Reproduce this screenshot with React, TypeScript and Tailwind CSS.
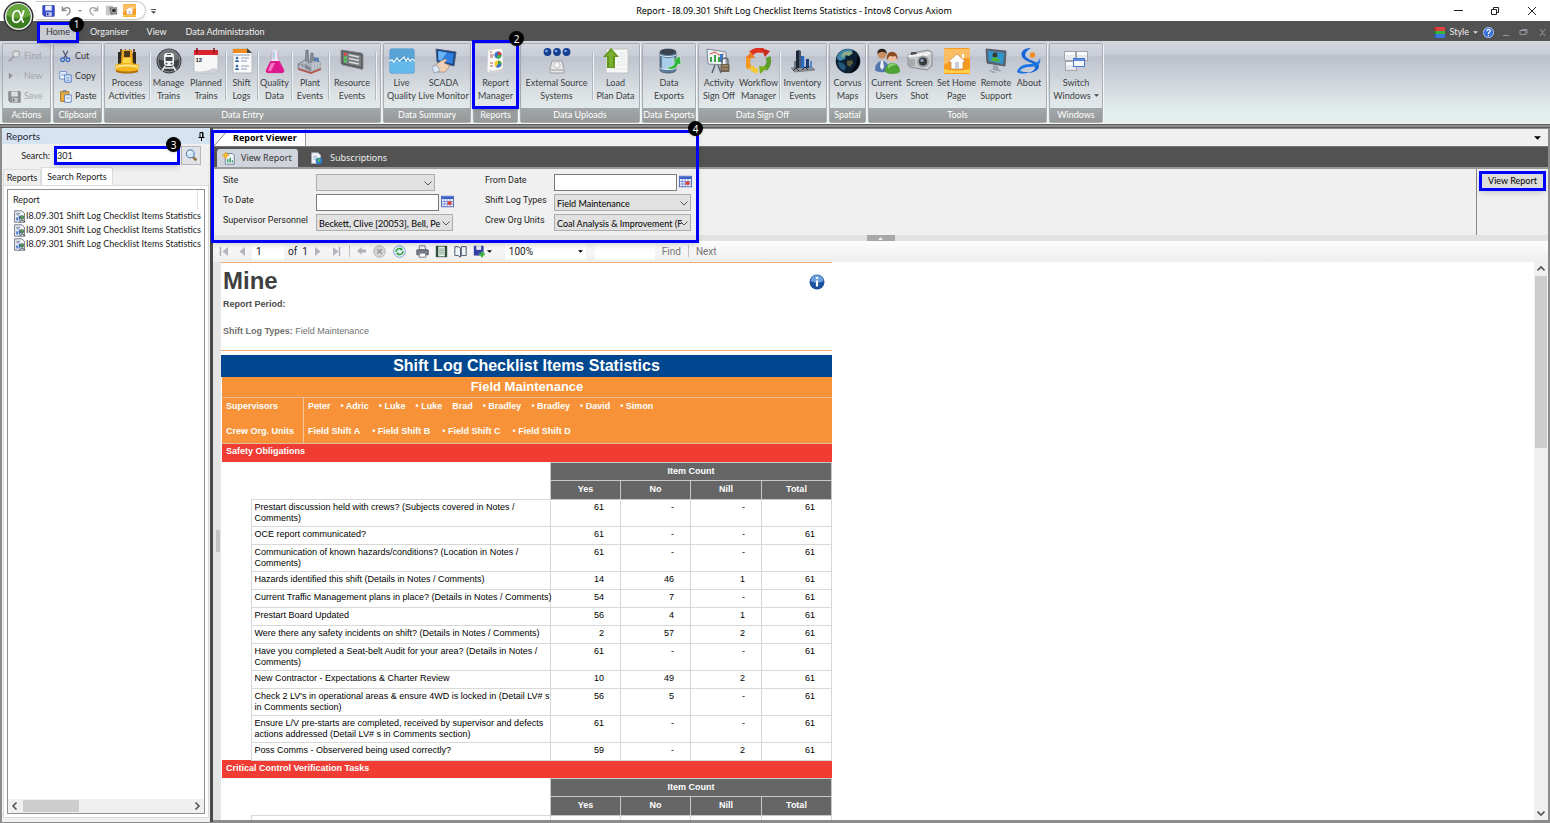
import React from "react";

type IconProps = { className?: string };

/* ---------- ribbon icons (26 x 26 grid) ---------- */
const Svg = ({ children, className = "size-[26px]", box = "0 0 26 26" }: { children: React.ReactNode; className?: string; box?: string }) => (
  <svg viewBox={box} className={`${className} shrink-0`} aria-hidden="true" fill="none">
    {children}
  </svg>
);

const ProcessIcon = () => (
  <Svg>
    <path d="M4 5h2V1h2v4h3V1h1v5h3V1h1v4h3V1h2v4h1v10H4z" fill="#6b5a3a" />
    <path d="M8 2h10l1 14H7z" fill="#f0a818" />
    <path d="M10 3h6v6h-6z" fill="#4a3c20" />
    <path d="M4 4h3v12H4zM19 4h3v12h-3z" fill="#2e2a22" />
    <path d="M9 10h8v6H9z" fill="#ffd850" />
    <path d="M1 17c7-3 17-3 24 0l-1 6c-7 3-15 3-22 0z" fill="#f5b41c" />
    <path d="M2 18c7-2 15-2 22 0v2c-7-2-15-2-22 0z" fill="#ffe68a" />
    <path d="M2 22c7 2 15 2 22 0v2c-7 2-15 2-22 0z" fill="#b0700c" />
  </Svg>
);
const TrainIcon = () => (
  <Svg>
    <circle cx="13" cy="13" r="12.500" fill="#3e4145" />
    <circle cx="13" cy="13" r="11" stroke="#8b8f94" />
    <path d="M3 11a10 10 0 0 1 20 0c-6 3-14 3-20 0z" fill="#73777c" />
    <rect x="8" y="5" width="10" height="13" rx="3" fill="#f4f4f4" />
    <rect x="9.500" y="9" width="7" height="4" fill="#44484c" />
    <path d="M11 6.500h4" stroke="#44484c" />
    <circle cx="10.500" cy="15.500" r="1" fill="#44484c" />
    <circle cx="15.500" cy="15.500" r="1" fill="#44484c" />
    <path d="M9 18l-3 5M17 18l3 5M8 20h10" stroke="#e8e8e8" strokeWidth="1.500" />
  </Svg>
);
const CalendarIcon = () => (
  <Svg>
    <path d="M1 3h24v19l-4 3H3l-2-2z" fill="#f7f7f8" stroke="#b9bcc4" />
    <path d="M1 2h24v5H1z" fill="#d8222c" />
    <path d="M4 0v5M21 0v5" stroke="#7c1018" strokeWidth="1.500" />
    <text x="2.500" y="13.500" fontSize="6" fontWeight="700" fill="#222" fontFamily="Liberation Sans">12</text>
    <path d="M1 23c8 1 14 0 19-3l5 1-4 4H2z" fill="#cfd2da" />
  </Svg>
);
const ShiftIcon = () => (
  <Svg>
    <path d="M4 1h14l5 4v20H4z" fill="#fbfbfb" stroke="#b9b9b9" />
    <path d="M4 1h14v4H4z" fill="#f08a1c" />
    <path d="M18 0l5 5h-5z" fill="#444" />
    <circle cx="8" cy="10" r="1.300" fill="#2f68a8" />
    <path d="M6 14a2 2 0 0 1 4 0z" fill="#2f68a8" />
    <circle cx="8" cy="18" r="1.300" fill="#2f68a8" />
    <path d="M6 22a2 2 0 0 1 4 0z" fill="#2f68a8" />
    <path d="M12 10h8M12 13h6M12 18h8M12 21h6M5 7h16" stroke="#8a9cb4" />
  </Svg>
);
const FlaskIcon = () => (
  <Svg>
    <path d="M10 2h6v8l6 12c.5 2-.5 3-2 3H6c-1.500 0-2.500-1-2-3l6-12z" fill="#f3e6f3" stroke="#c9a9c6" />
    <path d="M8.500 13h9l4.500 9c.4 2-.6 3-2 3H6c-1.400 0-2.400-1-2-3z" fill="#e0188f" />
    <path d="M9 15h4l-4 8H6z" fill="#f874c2" />
    <path d="M9 1h8v2H9z" fill="#d8d8e4" />
    <path d="M11 4h2v7h-2z" fill="#a7d8ea" />
  </Svg>
);
const PlantIcon = () => (
  <Svg>
    <path d="M9 2h2l1 16H8zM14 5h2l1 12h-4z" fill="#878e98" stroke="#5f6670" strokeWidth=".6" />
    <path d="M10 1c-2 0-2-1 1-1M15 4c0-2 2-2 3-2" stroke="#d8dce0" />
    <path d="M1 16l7-4 5 3 5-4 5 3v7l-9 4L1 20z" fill="#a9b0ba" stroke="#666d78" strokeWidth=".6" />
    <path d="M2 17l6 3 6 3v-3l-6-4-6-1z" fill="#7d8590" />
    <path d="M1 21l13 4 10-4" stroke="#b7584a" strokeWidth="1.800" />
    <path d="M4 15v5M7 14v7M16 15v7M19 14v7M22 14v6" stroke="#e0e4ea" strokeWidth=".8" />
    <path d="M17 9l5 1v4l-5-1z" fill="#5a7fb0" />
  </Svg>
);
const ResourceIcon = () => (
  <Svg>
    <path d="M3 2l19 3c1 0 2 1 2 2v13c0 1-1 2-2 1L4 17c-1 0-2-1-2-2V3c0-1 0-1 1-1z" fill="#54585c" stroke="#8a8e92" />
    <path d="M4 4l18 3v12L4 15z" fill="#7a7e82" />
    <rect x="5" y="5" width="3" height="2.500" fill="#e04838" />
    <rect x="5" y="8.500" width="3" height="2.500" fill="#4ec850" />
    <rect x="5" y="12" width="3" height="2.500" fill="#4ec850" />
    <path d="M10 7l10 2M10 10.500l10 2M10 14l10 2" stroke="#dcdcdc" strokeWidth="1.500" />
  </Svg>
);
const LiveQualityIcon = () => (
  <Svg>
    <rect x=".5" y=".5" width="25" height="25" rx="2" fill="#3d8fcb" />
    <path d="M1 13h24v10c0 1-1 2-2 2H3c-1 0-2-1-2-2z" fill="#65b9ea" />
    <path d="M1 1h24v9C16 8 8 10 1 14z" fill="#5aa3d6" />
    <path d="M0 13l3-1 2 2 3-4 2 3 3-2 2-2 2 4 2-3 2 3 2-2 3 2" stroke="#fff" strokeWidth="1.200" />
  </Svg>
);
const ScadaIcon = () => (
  <Svg>
    <path d="M5 1l20 3-2 14-17-4z" fill="#183e7c" stroke="#53688a" />
    <path d="M7 3l16 2.500-1.500 10.500L7.500 12.500z" fill="#2f7fe0" />
    <path d="M7 3l9 1.500-6 8-2.500-.5z" fill="#69b4f6" />
    <path d="M3 18l7-5 4-2 2 1-3 3 5 2v2l-4 5-8 0z" fill="#f0cfb4" stroke="#9c7862" strokeWidth=".6" />
    <path d="M1 19l5-2 3 6-6 2z" fill="#dfe9f5" stroke="#7a8ba5" strokeWidth=".6" />
  </Svg>
);
const ReportIcon = () => (
  <Svg>
    <path d="M5 2l13-2 2 2v20l-2 2-13 1-1-3z" fill="#fafafa" stroke="#c8c8c8" strokeWidth=".7" />
    <circle cx="15" cy="7" r="3.500" fill="#3a70cf" />
    <path d="M15 7V3.500A3.500 3.500 0 0 1 18.500 7z" fill="#e03a30" />
    <path d="M15 7h3.500A3.500 3.500 0 0 1 13 10z" fill="#47b24a" />
    <circle cx="15" cy="16" r="3.500" fill="#f2cb24" />
    <path d="M15 16v-3.500a3.500 3.500 0 0 1 3.500 3.500z" fill="#3a9c4a" />
    <path d="M15 16h3.500a3.500 3.500 0 0 1-5.500 3z" fill="#3a70cf" />
    <path d="M7 4h2M7 7h4M7 9h3M7 15h3M7 18h3" stroke="#b65c50" />
    <path d="M6 22c5 1 9 0 14-2v2l-2 2-12 1z" fill="#d5d5d5" />
  </Svg>
);
const SourceIcon = () => (
  <Svg className="h-[26px] w-[28px]" box="0 0 28 26">
    {[4.5, 14, 23.5].map((x) => (
      <g key={x}>
        <circle cx={x} cy="4" r="3.900" fill="#163f8f" />
        <circle cx={x - 1} cy="3" r="1.300" fill="#7ba6e8" />
      </g>
    ))}
    <path d="M4.500 8v3h19V8M14 8v5" stroke="#c0c4ca" />
    <path d="M9 13h10l2 8v4H7v-4z" fill="#e6e6e8" stroke="#9e9ea2" />
    <circle cx="14" cy="17" r="3" stroke="#c2c2c6" fill="#f6f6f6" />
    <path d="M8 22h12" stroke="#9a9a9e" />
  </Svg>
);
const LoadIcon = () => (
  <Svg>
    <path d="M3 1h22v24H3z" fill="#f7f7f7" stroke="#c2c2c2" />
    <path d="M17 5h6M17 8h6M17 11h6M14 14h9M6 21h17M14 17h9" stroke="#e2e4e8" />
    <path d="M8 0l8 9h-4v11H4V9H0z" fill="#5f961a" />
    <path d="M8 2l5 6h-3v11H6V8H3z" fill="#7ab030" />
  </Svg>
);
const ExportIcon = () => (
  <Svg>
    <path d="M4 4c0-4 16-4 16 0v18c0 4-16 4-16 0z" fill="#5d7f9d" stroke="#3c4d60" strokeWidth=".7" />
    <ellipse cx="12" cy="4" rx="8" ry="3" fill="#3a444e" />
    <path d="M6 9c3 1.500 9 1.500 12 0v11c-3 2-9 2-12 0z" fill="#a9cdea" />
    <path d="M4 7c3 2 13 2 16 0M4 20c3 2 13 2 16 0" stroke="#e6eef6" />
    <path d="M12 19c4 0 7-2 7-6l-3 0 8-5 1 9-3-1c-1 4-5 6-10 5z" fill="#2fb43c" stroke="#e8fbe8" strokeWidth=".5" />
  </Svg>
);
const SignOffIcon = () => (
  <Svg>
    <path d="M1 1l19 3v13L2 16z" fill="#eef3f8" stroke="#7c8795" />
    <path d="M4 14V9h2v5zM8 14V7h2v7zM12 14V9h2v5z" fill="#3aa346" />
    <path d="M4 6l5-2 4 3 5-1" stroke="#d8452e" />
    <path d="M14 6h3v8h-3z" fill="#3c79cc" />
    <path d="M9 17l-3 8M12 17l3 8" stroke="#5d6671" strokeWidth="1.500" />
    <path d="M16 16v-3c0-4 6-4 6 0v3" stroke="#6a6a6a" strokeWidth="1.500" />
    <rect x="14.500" y="16" width="9" height="8" rx="1" fill="#6d6253" />
    <path d="M16 18h6M16 21h6" stroke="#c2a35c" />
  </Svg>
);
const WorkflowIcon = () => (
  <Svg>
    <path d="M5 5.500a10.500 10.500 0 0 1 12-2.500" stroke="#df3420" strokeWidth="5" />
    <path d="M15 0l9 3-5 6z" fill="#c92a1a" />
    <path d="M22 9a10.500 10.500 0 0 1-3 12" stroke="#5c9c2c" strokeWidth="5" />
    <path d="M22 19l-8 7-1-8z" fill="#7aac20" />
    <path d="M12 23a10 10 0 0 1-7-4" stroke="#f4c832" strokeWidth="5" />
    <path d="M3.500 20a10.500 10.500 0 0 1-.5-11" stroke="#f29a1c" strokeWidth="5" />
    <path d="M0 10l5-6 4 6z" fill="#f07820" />
  </Svg>
);
const InventoryIcon = () => (
  <Svg>
    <path d="M1 20l20-2 4 4-20 2z" fill="#8d9097" stroke="#5f6268" strokeWidth=".6" />
    <path d="M6 3l3-1v18H6z" fill="#1c2634" />
    <path d="M9 2l2 1v17H9z" fill="#4a5a70" />
    <path d="M11 8h3v12h-3z" fill="#2f68b8" />
    <path d="M14 9h1v11h-1z" fill="#86b0e6" />
    <path d="M16 11h3v9h-3z" fill="#1c3c74" />
    <path d="M20 13h2v7h-2z" fill="#4f88d0" />
    <path d="M4 13h2v8H4z" fill="#6d7786" />
    <path d="M3 23l3-3 3 3M12 22l3-3 3 3" stroke="#2a2d33" />
  </Svg>
);
const GlobeIcon = () => (
  <Svg>
    <circle cx="13" cy="13" r="12.300" fill="#0b2033" />
    <path d="M5 4c4-3 9-4 13-2l-2 4-5 1-1 4-5 2-3-2c0-3 1-5 3-7z" fill="#3d86a8" />
    <path d="M9 4l6-1 3 2-4 3-4-1-2 3-2-2z" fill="#8fae8a" />
    <path d="M3 14l5 1 3 4-2 4c-4-2-6-5-6-9z" fill="#24597c" />
    <path d="M22 6a12 12 0 0 1-7 19c5-5 8-11 7-19z" fill="#02060b" />
    <path d="M12 13l5-1 1 3-3 4-3-2z" fill="#5c5a3c" />
  </Svg>
);
const UsersIcon = () => (
  <Svg>
    <circle cx="8" cy="6" r="4.500" fill="#c98d62" />
    <path d="M3.500 6C2-1 14-1 12.500 6 11 3 6 3 3.500 6z" fill="#2d2620" />
    <path d="M1 22c0-12 14-12 14 0-3 3-11 3-14 0z" fill="#5577ad" />
    <path d="M7 13h2l1 6-2 3-2-3z" fill="#eef2f8" />
    <circle cx="18" cy="9" r="4.500" fill="#edbf98" />
    <path d="M13 12c-2-11 12-11 10.500 0l-2-4c-3 1-5 0-6 0z" fill="#8c4a22" />
    <path d="M11 24c0-12 15-12 15 0-3 2.500-12 2.500-15 0z" fill="#4ea236" />
    <path d="M14 18c2-3 6-3 8-1-3 0-6 1-8 4z" fill="#8fd070" />
  </Svg>
);
const CameraIcon = () => (
  <Svg>
    <path d="M1 7l5-2 15-3 4 2v14l-5 4-17-3-2-2z" fill="#c9cbce" stroke="#74777c" strokeWidth=".8" />
    <path d="M1 7l20-3 4 1-5 3-19 1z" fill="#f1f1f2" />
    <path d="M4 4h5l1 2-6 1z" fill="#4b4e52" />
    <circle cx="16" cy="13.500" r="6" fill="#9d9fa4" />
    <circle cx="16" cy="13.500" r="4" fill="#34373b" />
    <circle cx="15" cy="12.500" r="1.700" fill="#8f9fb8" />
    <path d="M2 11h6v7H2z" fill="#a6a9ad" />
  </Svg>
);
const HomeIcon = ({ className }: IconProps) => (
  <Svg className={className}>
    <rect width="26" height="26" rx="1.500" fill="#f79a20" />
    <path d="M0 1h26v9C17 10 9 12 0 17z" fill="#fbbe62" />
    <path d="M0 21c9 2 17 2 26 0v4H0z" fill="#fdd04c" />
    <path d="M5 13l8-7 8 7v1h-2v7H7v-7H5z" fill="#fff" stroke="#c98550" strokeWidth=".7" />
    <path d="M18 6h2v5l-2-2z" fill="#fff" />
    <rect x="11" y="14" width="4" height="7" fill="#c8ccd6" />
  </Svg>
);
const RemoteIcon = () => (
  <Svg>
    <path d="M3 1l20 2-1 15L4 15z" fill="#5c6878" stroke="#3c4450" strokeWidth=".7" />
    <path d="M5 3l16 2-1 11L6 13z" fill="#2f96cf" />
    <circle cx="12" cy="7" r="2.500" fill="#3a3a2c" />
    <path d="M8 13c0-5 8-5 9 1z" fill="#4eb43c" />
    <path d="M10 17l5 1v3l4 2-9 2-5-3 5-1z" fill="#9aa2ac" />
    <path d="M4 21l12 3" stroke="#d4d8de" />
  </Svg>
);
const AboutIcon = () => (
  <Svg>
    <path d="M15 0C7 0 3 5 7 10c3 4 11 4 12 9 .3 3-3 5-8 6 7 0 12-3 12-7-.5-5-10-5-13-9-2-3 0-6 5-9z" fill="#1565d8" />
    <path d="M1 24c1-5 6-8 13-8 5 0 9-2 10-6 1.500 6-3 9-10 9-5 0-8 1-10 4 3 1 6 1 9 1-4 2-9 2-12 0z" fill="#1f74e4" />
    <circle cx="16.500" cy="7" r="2.700" fill="#f28c1c" />
  </Svg>
);
const SwitchIcon = () => (
  <Svg>
    {[
      [1.5, 3.5],
      [13.5, 3.5],
      [2.5, 13.5],
    ].map(([x, y]) => (
      <g key={`${x}-${y}`}>
        <rect x={x} y={y} width="11" height="9" fill="#e4e7eb" stroke="#a2a6ac" />
        <path d={`M${x + 0.5} ${y + 2}h10`} stroke="#fff" strokeWidth="2.500" />
      </g>
    ))}
    <rect x="10.500" y="10.500" width="11" height="8" fill="#f4f7fc" stroke="#4a78cc" />
    <path d="M11 12h10" stroke="#5b8ae0" strokeWidth="2" />
  </Svg>
);

/* ---------- small icons (16 x 16 grid) ---------- */
const S = ({ children, className = "size-[13px]" }: { children: React.ReactNode; className?: string }) => (
  <Svg className={className} box="0 0 16 16">
    {children}
  </Svg>
);
const FindIcon = () => (
  <S>
    <circle cx="10" cy="5" r="4" fill="#dedfe2" stroke="#a5a7ab" strokeWidth="1.500" />
    <path d="M7 8l-6 6" stroke="#a0a2a6" strokeWidth="2.500" />
  </S>
);
const NewIcon = () => (
  <S>
    <path d="M1 3l5 4-5 4z" fill="#909398" />
    <path d="M7 4h7M8 7h5" stroke="#c4c7cc" />
  </S>
);
const DiskIcon = ({ blue = false }: { blue?: boolean }) => (
  <S>
    <path d="M1 2h14v13H3l-2-2z" fill={blue ? "#3b4fd0" : "#8f9296"} stroke={blue ? "#22309a" : "#7b7e82"} />
    <path d="M4 2h8v6H4z" fill={blue ? "#eef0ff" : "#dedfe1"} />
    <path d="M5 10h7v5H5z" fill={blue ? "#bfc6ec" : "#c7c9cc"} />
    <path d="M6 11h2v3H6z" fill={blue ? "#22309a" : "#74777b"} />
  </S>
);
const CutIcon = () => (
  <S>
    <path d="M5 1l5 9M11 1L6 10" stroke="#4d5a70" strokeWidth="1.500" />
    <circle cx="4.500" cy="12" r="2.300" stroke="#2a62c0" strokeWidth="1.500" />
    <circle cx="11" cy="12" r="2.300" stroke="#2a62c0" strokeWidth="1.500" />
  </S>
);
const CopyIcon = () => (
  <S>
    <path d="M1 2h8v9H1z" fill="#fff" stroke="#5580c8" />
    <path d="M2.500 5h5M2.500 7h5" stroke="#7fa3de" />
    <path d="M7 6h8v9H7z" fill="#dfe9fb" stroke="#3f6cc0" />
    <path d="M9 9h4M9 11h4M9 13h4" stroke="#6f96dc" />
  </S>
);
const PasteIcon = () => (
  <S>
    <path d="M2 2h10v12H2z" fill="#e8ac3c" stroke="#9c6a14" />
    <path d="M5 0h4v3H5z" fill="#8b8d92" />
    <path d="M7 6h8v9H7z" fill="#fff" stroke="#3f6cc0" />
    <path d="M9 9h4M9 11h4" stroke="#6f96dc" />
  </S>
);
const ReportDocIcon = ({ className }: IconProps) => (
  <S className={className}>
    <path d="M2 1h9l3 3v11H2z" fill="#f4f7fb" stroke="#50596a" />
    <path d="M4 4h5M4 6h4" stroke="#5d6c88" />
    <path d="M4 13V9h2v4zM7 13V7h2v6z" fill="#3a6fc2" />
    <circle cx="11" cy="9" r="2.300" fill="#4da050" stroke="#33383f" strokeWidth=".6" />
    <path d="M8 15l3-3 4 3" stroke="#33383f" strokeWidth="1.200" />
  </S>
);
const ViewReportIcon = () => (
  <S>
    <path d="M4 2h9l2 2v11H4z" fill="#f4f7fb" stroke="#59708f" />
    <path d="M6 13V9h2v4zM9 13V7h2v6zM12 13v-3h1.500v3z" fill="#3aa06a" />
    <path d="M4.500 0l1.200 2.500L9 4 6 5.500 4.500 9 3.200 5.500 0 4.200 3 3z" fill="#ffc02c" stroke="#e08a10" strokeWidth=".6" />
  </S>
);
const SubscriptionIcon = () => (
  <S>
    <path d="M2 1h8l3 3v10H2z" fill="#f6f8fb" stroke="#a8b2c2" />
    <path d="M4 5h5M4 7h5M4 9h4" stroke="#9ab0cc" />
    <circle cx="11" cy="11" r="4" fill="#2878d0" />
    <path d="M9 9l3-1 1 3-3 2z" fill="#5cc04a" />
  </S>
);
const DateIcon = () => (
  <S>
    <rect x=".5" y="1.500" width="15" height="13" fill="#f4f7ff" stroke="#3a55b0" />
    <path d="M1 2h14v3H1z" fill="#3c62c8" />
    <path d="M1 8h14M1 11h14M4 5v10M7.500 5v10M11 5v10" stroke="#6f88d8" />
    <rect x="8" y="8" width="5" height="4" fill="#e04030" />
  </S>
);
const Lens = () => (
  <S>
    <path d="M9 9l5 5" stroke="#8f6f40" strokeWidth="3" />
    <circle cx="6.500" cy="6" r="4.800" fill="#d3e8fa" stroke="#6488b4" strokeWidth="1.500" />
    <path d="M4 6a3 3 0 0 1 3-3" stroke="#fff" strokeWidth="1.200" />
  </S>
);
const Chevron = ({ className = "size-2", bold = false }: IconProps & { bold?: boolean }) => (
  <Svg className={className} box="0 0 8 8">
    <path d="M.5 2.500L4 6l3.500-3.500" stroke="#555" strokeWidth={bold ? 1.600 : 1} />
  </Svg>
);
const Caret = ({ className = "h-1 w-[7px] text-black" }: IconProps) => (
  <Svg className={className} box="0 0 8 4">
    <path d="M0 0h8L4 4z" fill="currentColor" />
  </Svg>
);

/* ---------- shared pieces ---------- */
const Badge = ({ n, className }: { n: number; className: string }) => (
  <span className={`absolute z-20 flex size-[15px] items-center justify-center rounded-full bg-black font-['Noto_Sans',sans-serif] text-[10px] leading-none text-white shadow ${className}`}>
    {n}
  </span>
);

type Tool = { lines: string[]; icon: React.ReactNode; w: string; sep?: boolean; caret?: boolean };

const ToolButton = ({ t }: { t: Tool }) => (
  <>
    <button type="button" className={`flex h-full flex-col items-center pt-1 text-center leading-[13px] whitespace-nowrap ${t.w}`}>
      <span className="mb-[2px] flex">{t.icon}</span>
      {t.lines.map((l, i) => (
        <span key={l} className="flex items-center gap-[3px]">
          {l}
          {t.caret && i === 1 && <Caret className="h-[3px] w-[5px] text-[#444]" />}
        </span>
      ))}
    </button>
    {t.sep && <span className="my-2 w-px shrink-0 bg-[#b4b8bf] shadow-[1px_0_0_#eef1f3]" />}
  </>
);

const Group = ({ title, children, className = "", align = "justify-center" }: { title: string; children: React.ReactNode; className?: string; align?: string }) => (
  <section className={`relative flex shrink-0 flex-col rounded-[2px] border border-[#a9adb3] shadow-[1px_1px_0_#f4f6f8] ${className}`}>
    <div className={`flex h-[64px] bg-[linear-gradient(#d3d7df,#c8ccd6_12px,#bdc2cd_13px,#dde2e5_50px,#e2e9ea)] ${align}`}>{children}</div>
    <h2 className="h-[14px] bg-linear-to-b from-[#a4a7a7] to-[#969999] text-center leading-[14px] whitespace-nowrap text-white">{title}</h2>
  </section>
);

const groups: { title: string; w: string; tools: Tool[]; mark?: boolean; align?: string }[] = [
  {
    title: "Data Entry",
    w: "w-[277px]",
    align: "justify-start",
    tools: [
      { lines: ["Process", "Activities"], icon: <ProcessIcon />, w: "w-[44px]", sep: true },
      { lines: ["Manage", "Trains"], icon: <TrainIcon />, w: "w-[37px]" },
      { lines: ["Planned", "Trains"], icon: <CalendarIcon />, w: "w-[38px]", sep: true },
      { lines: ["Shift", "Logs"], icon: <ShiftIcon />, w: "w-[31px]", sep: true },
      { lines: ["Quality", "Data"], icon: <FlaskIcon />, w: "w-[33px]", sep: true },
      { lines: ["Plant", "Events"], icon: <PlantIcon />, w: "w-[36px]", sep: true },
      { lines: ["Resource", "Events"], icon: <ResourceIcon />, w: "w-[46px]", sep: true },
    ],
  },
  {
    title: "Data Summary",
    w: "w-[88px]",
    tools: [
      { lines: ["Live", "Quality"], icon: <LiveQualityIcon />, w: "w-[33px]" },
      { lines: ["SCADA", "Live Monitor"], icon: <ScadaIcon />, w: "w-[51px]" },
    ],
  },
  { title: "Reports", w: "w-[45px]", mark: true, tools: [{ lines: ["Report", "Manager"], icon: <ReportIcon />, w: "w-[43px]" }] },
  {
    title: "Data Uploads",
    w: "w-[120px]",
    tools: [
      { lines: ["External Source", "Systems"], icon: <SourceIcon />, w: "w-[70px]", sep: true },
      { lines: ["Load", "Plan Data"], icon: <LoadIcon />, w: "w-[46px]" },
    ],
  },
  { title: "Data Exports", w: "w-[54px]", tools: [{ lines: ["Data", "Exports"], icon: <ExportIcon />, w: "w-[50px]" }] },
  {
    title: "Data Sign Off",
    w: "w-[129px]",
    tools: [
      { lines: ["Activity", "Sign Off"], icon: <SignOffIcon />, w: "w-[38px]" },
      { lines: ["Workflow", "Manager"], icon: <WorkflowIcon />, w: "w-[41px]", sep: true },
      { lines: ["Inventory", "Events"], icon: <InventoryIcon />, w: "w-[45px]" },
    ],
  },
  { title: "Spatial", w: "w-[37px]", tools: [{ lines: ["Corvus", "Maps"], icon: <GlobeIcon />, w: "w-[35px]" }] },
  {
    title: "Tools",
    w: "w-[179px]",
    align: "justify-start",
    tools: [
      { lines: ["Current", "Users"], icon: <UsersIcon />, w: "w-[35px]" },
      { lines: ["Screen", "Shot"], icon: <CameraIcon />, w: "w-[31px]" },
      { lines: ["Set Home", "Page"], icon: <HomeIcon />, w: "w-[43px]" },
      { lines: ["Remote", "Support"], icon: <RemoteIcon />, w: "w-[36px]" },
      { lines: ["About"], icon: <AboutIcon />, w: "w-[30px]" },
    ],
  },
  { title: "Windows", w: "w-[54px]", tools: [{ lines: ["Switch", "Windows"], icon: <SwitchIcon />, w: "w-[52px]", caret: true }] },
];

const SmallTool = ({ icon, label, off = false }: { icon: React.ReactNode; label: string; off?: boolean }) => (
  <button type="button" disabled={off} className={`flex h-5 items-center gap-[3px] pl-[5px] ${off ? "text-[#a3a6ab]" : "text-[#333]"}`}>
    {icon}
    {label}
  </button>
);

const TitleBar = () => (
  <header className="relative flex h-[21px] items-center bg-white">
    <div className="ml-[36px] flex h-[19px] w-[110px] items-center gap-[5px] rounded-r-full border border-l-0 border-[#c9c9c9] pl-[6px] shadow-sm">
      <DiskIcon blue />
      <S>
        <path d="M3 3v5h5M3 8c3-5 11-5 9 2-.5 2-2 3-4 4" stroke="#8a8d92" strokeWidth="1.800" />
      </S>
      <Caret className="h-[2px] w-1 text-[#888]" />
      <S>
        <path d="M13 3v5H8M13 8C10 3 2 3 4 10c.5 2 2 3 4 4" stroke="#a5a8ad" strokeWidth="1.800" />
      </S>
      <S>
        <path d="M1 2h9v12H1z" fill="#c8c8c8" />
        <path d="M5 4h10v9H7z" fill="#77797c" />
        <circle cx="11" cy="8" r="3" fill="#333" stroke="#ccc" />
      </S>
      <HomeIcon className="size-[13px]" />
    </div>
    <span className="ml-[5px] flex flex-col items-center gap-px pt-[2px]">
      <span className="h-px w-[5px] bg-[#555]" />
      <Caret className="h-[3px] w-[5px] text-[#444]" />
    </span>
    <h1 className="absolute inset-x-0 ml-[38px] text-center font-['Noto_Sans',sans-serif] text-[9px] text-black">
      Report - I8.09.301 Shift Log Checklist Items Statistics - Intov8 Corvus Axiom
    </h1>
    <div className="relative ml-auto flex items-center gap-[27px] pr-[13px]">
      <button type="button" aria-label="Minimise" className="h-px w-[9px] bg-[#222]" />
      <button type="button" aria-label="Restore">
        <Svg className="size-[10px]" box="0 0 10 10">
          <path d="M1.500 3.500h5v5h-5zM3.500 3.500v-2h5v5h-2" stroke="#222" />
        </Svg>
      </button>
      <button type="button" aria-label="Close">
        <Svg className="size-[10px]" box="0 0 10 10">
          <path d="M1 1l8 8M9 1l-8 8" stroke="#222" />
        </Svg>
      </button>
    </div>
  </header>
);

const MenuBar = () => (
  <nav className="flex h-[20px] items-center bg-[#525252] pt-[2px] pl-[37px] text-[#f0f0f0]">
    <a href="#home" className="relative z-10 flex h-[21px] w-[42px] items-center justify-center border-[3px] border-[#0000ff] bg-[#c9ccd3] text-[#333] shadow-md">
      Home
      <Badge n={1} className="-top-[8px] -right-[8px]" />
    </a>
    <a href="#organiser" className="ml-[11px]">Organiser</a>
    <a href="#view" className="ml-[18px]">View</a>
    <a href="#admin" className="ml-[19px]">Data Administration</a>
    <div className="ml-auto flex items-center gap-[5px] pr-[4px]">
      <Svg className="size-[11px]" box="0 0 11 11">
        <path d="M0 0h11v4H0z" fill="#e0403c" />
        <path d="M0 4h11v3H0z" fill="#36b43c" />
        <path d="M0 7h11v4H0z" fill="#3a78e0" />
        <path d="M0 0h2v11H0z" fill="#000" opacity=".25" />
      </Svg>
      <button type="button" className="flex items-center gap-[4px]">
        Style
        <Caret className="h-[3px] w-[5px] text-[#ddd]" />
      </button>
      <Svg className="mr-[4px] size-[11px]" box="0 0 16 16">
        <circle cx="8" cy="8" r="7.500" fill="#3a72d8" stroke="#dfe8fa" />
        <path d="M5.500 6c0-3.500 5-3.500 5-.5C10.500 7.500 8 7.500 8 10M8 11.500v2" stroke="#fff" strokeWidth="1.800" />
      </Svg>
      <Svg className="h-[9px] w-[43px]" box="0 0 43 9">
        <path d="M0 7.500h6M17 2.500h6v4h-6zM19 2.500v-1h5v4M37 1l5 7M42 1l-5 7" stroke="#9298a0" />
      </Svg>
    </div>
  </nav>
);

const Orb = () => (
  <button type="button" aria-label="Application menu" className="absolute top-[1px] left-[3px] z-20">
    <Svg className="size-[31px]" box="0 0 32 32">
      <circle cx="16" cy="16" r="15.500" fill="#2f3030" />
      <circle cx="16" cy="16" r="14" fill="#e9ece9" />
      <circle cx="16" cy="16" r="12.500" fill="#3d7d22" />
      <path d="M4 15a12 12 0 0 1 24 0c-7 4-17 4-24 0z" fill="#67a63c" />
      <path d="M21.500 9.500c-1 5-4 12.500-8 12.500-2.500 0-3.500-2-3.500-5 0-4 2-7 5-7 4 0 3.500 11 6.500 12" stroke="#fff" strokeWidth="1.900" />
    </Svg>
  </button>
);

const Ribbon = () => (
  <div className="flex h-[83px] gap-[2px] border-b border-[#f4f4f4] bg-[linear-gradient(#d3d7e0,#c8ccd6_13px,#bbc0cb_15px,#e4eded_70px,#e6f0f0)] pt-[2px] pl-[2px] text-[#3c3f44]">
    <Group title="Actions" className="w-[49px]" align="justify-start">
      <div className="flex w-full flex-col pt-[2px]">
        <SmallTool icon={<FindIcon />} label="Find" off />
        <SmallTool icon={<NewIcon />} label="New" off />
        <SmallTool icon={<DiskIcon />} label="Save" off />
      </div>
    </Group>
    <Group title="Clipboard" className="w-[49px]" align="justify-start">
      <div className="flex w-full flex-col pt-[2px]">
        <SmallTool icon={<CutIcon />} label="Cut" />
        <SmallTool icon={<CopyIcon />} label="Copy" />
        <SmallTool icon={<PasteIcon />} label="Paste" />
      </div>
    </Group>
    {groups.map((g) => (
      <Group key={g.title} title={g.title} className={g.w} align={g.align}>
        {g.tools.map((t) => (
          <ToolButton key={t.lines.join()} t={t} />
        ))}
        {g.mark && (
          <span className="pointer-events-none absolute -top-[4px] -right-[2px] -left-[2px] z-10 h-[69px] border-[3px] border-[#0000ff] shadow-md">
            <Badge n={2} className="-top-[12px] -right-[8px]" />
          </span>
        )}
      </Group>
    ))}
  </div>
);

const LeftPanel = () => (
  <aside className="flex w-[208px] shrink-0 flex-col bg-[#f0f0f0] pb-1">
    <div className="flex h-4 items-center justify-between bg-[#d6e4f2] px-1 text-[10px] leading-[14px] text-[#1f2a3a]">
      <h2>Reports</h2>
      <Svg className="size-[9px]" box="0 0 9 9">
        <path d="M3 .5h3v5H3zM1.500 5.500h6M4.500 5.500V9M5.500 1v4" stroke="#000" />
      </Svg>
    </div>
    <form className="flex h-[23px] items-center" onSubmit={(e) => e.preventDefault()}>
      <label htmlFor="q" className="w-[52px] pr-1 text-right">Search:</label>
      <span className="relative">
        <input id="q" defaultValue="301" className="block h-[19px] w-[126px] border-[3px] border-[#0000ff] bg-white text-[9px] shadow-md outline-none" />
        <Badge n={3} className="-top-[9px] -right-[1px]" />
      </span>
      <button type="submit" aria-label="Search" className="ml-px flex h-[19px] w-5 items-center justify-center border border-[#b4b8be] bg-[#e1e3e6]">
        <Lens />
      </button>
    </form>
    <div className="flex items-end pl-px">
      <button type="button" className="h-4 w-[38px] border border-b-0 border-[#dcdcdc]">Reports</button>
      <button type="button" className="h-[18px] w-[72px] border border-b-0 border-[#dcdcdc] bg-white">Search Reports</button>
    </div>
    <div className="mx-px flex min-h-0 flex-1 flex-col border border-[#dcdcdc] bg-white p-[3px]">
      <div className="flex min-h-0 flex-1 flex-col border border-[#8a8f98] bg-white">
        <div className="mr-[6px] h-[19px] border-r border-[#e2e2e2] pl-[5px] leading-[20px]">Report</div>
        <ul className="flex-1 pl-[5px]">
          {[1, 2, 3].map((k) => (
            <li key={k}>
              <a href={`#report-${k}`} className="flex h-[14px] items-center whitespace-nowrap">
                <ReportDocIcon className="size-[13px]" />
                I8.09.301 Shift Log Checklist Items Statistics
              </a>
            </li>
          ))}
        </ul>
        <div className="flex h-[14px] items-center bg-[#f0f0f0] px-[3px]">
          <Chevron bold className="size-2 rotate-90" />
          <span className="ml-1 h-3 w-[56px] bg-[#cdcdcd]" />
          <Chevron bold className="ml-auto size-2 -rotate-90" />
        </div>
      </div>
    </div>
  </aside>
);

const Select = ({ id, value, w }: { id: string; value: string; w: string }) => (
  <span className={`relative block self-end ${w}`}>
    <select id={id} defaultValue={value} className="block h-[17px] w-full appearance-none overflow-hidden border border-[#adadad] bg-[#e1e1e1] pr-2 pl-[2px] text-black">
      <option>{value}</option>
    </select>
    <Chevron className="pointer-events-none absolute top-[5px] right-[3px] size-2" />
  </span>
);

const DateField = ({ id }: { id: string }) => (
  <span className="flex items-center gap-[2px] self-end">
    <input id={id} className="block h-[17px] w-[123px] border border-[#7a7a7a] bg-white px-1" />
    <button type="button" aria-label="Pick a date" className="-mt-[3px]">
      <DateIcon />
    </button>
  </span>
);

const Divider = () => <span className="h-3 w-px bg-[#c4c4c4]" />;

const Toolbar = () => (
  <div className="flex h-[20px] shrink-0 items-center bg-linear-to-b from-[#fdfdfd] to-[#efefef] pl-[6px] font-[Roboto,sans-serif] text-[#222]">
    <Svg className="h-[9px] w-[28px]" box="0 0 28 9">
      <path d="M1.500 0v9" stroke="#b0b4ba" strokeWidth="1.500" />
      <path d="M9 0v9L3.500 4.500zM26 0v9l-5.500-4.500z" fill="#b4b8be" />
    </Svg>
    <input aria-label="Page" defaultValue="1" className="ml-[5px] h-[18px] w-[32px] bg-white pl-1 text-[10px]" />
    <span className="ml-1 text-[10px]">of&nbsp; 1</span>
    <Svg className="ml-[7px] h-[9px] w-[28px]" box="0 0 28 9">
      <path d="M0 0v9l5.500-4.500zM18 0v9l5.500-4.500z" fill="#b4b8be" />
      <path d="M24.500 0v9" stroke="#b0b4ba" strokeWidth="1.500" />
    </Svg>
    <span className="ml-[6px] flex items-center gap-[7px]">
      <Divider />
      <Svg className="h-[8px] w-[9px]" box="0 0 9 8">
        <path d="M4.500 0v2.500H9v3H4.500V8L0 4z" fill="#b0b4b8" />
      </Svg>
      <Svg className="size-[13px]" box="0 0 14 14">
        <circle cx="7" cy="7" r="6.300" fill="#d6d6d6" stroke="#b4b4b4" />
        <path d="M4.500 4.500l5 5M9.500 4.500l-5 5" stroke="#999" strokeWidth="1.500" />
      </Svg>
      <Svg className="size-[13px]" box="0 0 14 14">
        <circle cx="7" cy="7" r="6.300" fill="#e4f0fa" stroke="#7ea4cc" />
        <path d="M3.500 7.500C3 4 7 3 9 4.500M10.500 6.500C11 10 7 11 5 9.500" stroke="#2f9e3a" strokeWidth="1.600" />
        <path d="M8 2.500l3 2.500-3 1zM6 11.500L3 9l3-1z" fill="#2f9e3a" />
      </Svg>
    </span>
    <span className="ml-[5px]"><Divider /></span>
    <span className="ml-[5px] flex items-center gap-[6px]">
      <S>
        <path d="M4 1h7l1 5H4z" fill="#f4f6fa" stroke="#5c6370" />
        <path d="M1 6h14v6H1z" fill="#7b828e" stroke="#454b55" />
        <path d="M4 10h8v5H4z" fill="#fff" stroke="#5c6370" />
      </S>
      <S>
        <path d="M1 1h14v14H1z" fill="#32503c" />
        <path d="M4 2h8v12H4z" fill="#e9f2ec" />
        <path d="M5 5h6M5 7h6M5 9h6M5 11h6" stroke="#7ba080" />
      </S>
      <S>
        <path d="M1 2h4l3 2v11l-3-2H1zM15 2H9v11h6z" fill="#f2f4f8" stroke="#4c5870" strokeWidth="1.200" />
      </S>
      <span className="flex items-center gap-px">
        <S>
          <path d="M1 1h12v12H1z" fill="#3440a8" />
          <path d="M4 1h6v5H4z" fill="#e8eaf8" />
          <path d="M11 8v7M7.500 11.500h7" stroke="#36b43c" strokeWidth="2.500" />
        </S>
        <Caret className="h-[3px] w-[5px] text-black" />
      </span>
    </span>
    <span className="ml-[6px]"><Divider /></span>
    <span className="relative ml-[7px]">
      <select aria-label="Zoom" defaultValue="100%" className="block h-[18px] w-[81px] appearance-none bg-white pl-1 text-[10px]">
        <option>100%</option>
      </select>
      <Caret className="pointer-events-none absolute top-2 right-[3px] h-[3px] w-[5px] text-black" />
    </span>
    <input aria-label="Find text" className="ml-[9px] h-[18px] w-[60px] bg-white" />
    <span className="ml-[7px] flex items-center gap-[7px] text-[10px] text-[#777]">
      <button type="button">Find</button>
      <Divider />
      <button type="button">Next</button>
    </span>
  </div>
);

/* ---------- report ---------- */
type Row = [string, string, string, string, string];
const rows: Row[] = [
  ["Prestart discussion held with crews? (Subjects covered in Notes /\nComments)", "61", "-", "-", "61"],
  ["OCE report communicated?", "61", "-", "-", "61"],
  ["Communication of known hazards/conditions? (Location in Notes /\nComments)", "61", "-", "-", "61"],
  ["Hazards identified this shift (Details in Notes / Comments)", "14", "46", "1", "61"],
  ["Current Traffic Management plans in place? (Details in Notes / Comments)", "54", "7", "-", "61"],
  ["Prestart Board Updated", "56", "4", "1", "61"],
  ["Were there any safety incidents on shift? (Details in Notes / Comments)", "2", "57", "2", "61"],
  ["Have you completed a Seat-belt Audit for your area? (Details in Notes /\nComments)", "61", "-", "-", "61"],
  ["New Contractor - Expectations & Charter Review", "10", "49", "2", "61"],
  ["Check 2 LV's in operational areas & ensure 4WD is locked in (Detail LV# s\nin Comments section)", "56", "5", "-", "61"],
  ["Ensure L/V pre-starts are completed, received by supervisor and defects\nactions addressed (Detail LV# s in Comments section)", "61", "-", "-", "61"],
  ["Poss Comms - Observered being used correctly?", "59", "-", "2", "61"],
];

const SectionHead = ({ title }: { title: string }) => (
  <>
    <tr className="h-[18px]">
      <th colSpan={6} scope="colgroup" className="bg-[#f03c32] pb-[3px] pl-1 text-left leading-[14px] font-bold text-white">{title}</th>
    </tr>
    <tr className="h-[18px] text-white">
      <td colSpan={2} rowSpan={2} />
      <th colSpan={4} className="border border-[#c8c8c8] bg-[#666]">Item Count</th>
    </tr>
    <tr className="h-[19px] text-white">
      {["Yes", "No", "Nill", "Total"].map((h) => (
        <th key={h} scope="col" className="border border-[#c8c8c8] bg-[#666]">{h}</th>
      ))}
    </tr>
  </>
);

const Report = () => (
  <article className="w-[611px] font-['Liberation_Sans',sans-serif] text-[9px]">
    <header className="relative h-[89px] border-y border-[#f7ab6c] pl-[2px] text-[#4c4c4c]">
      <h2 className="pt-1 text-[24px] leading-[28px] font-bold text-[#3f3f3f]">Mine</h2>
      <p className="mt-[3px] leading-[13px] font-bold">Report Period:</p>
      <p className="mt-[14px] leading-[13px] text-[#707070]"><b>Shift Log Types:</b> Field Maintenance</p>
      <Svg className="absolute top-[11px] right-[7px] size-4" box="0 0 16 16">
        <circle cx="8" cy="8" r="7.500" fill="#1c4f9e" />
        <path d="M1.500 7a6.500 6 0 0 1 13 0c-4 2-9 2-13 0z" fill="#6fa0de" />
        <path d="M8 6.500v6M8 3v2" stroke="#fff" strokeWidth="2.200" />
      </Svg>
    </header>
    <h3 className="mt-1 bg-[#00478f] text-center text-[16px] leading-[22px] font-bold text-white">Shift Log Checklist Items Statistics</h3>
    <div className="ml-px bg-[#f79238] font-bold text-white">
      <h4 className="border-b border-[#e3bd98] text-center text-[13px] leading-[20px]">Field Maintenance</h4>
      <dl className="grid h-[46px] grid-cols-[82px_1fr] border-b border-[#e3bd98] leading-[17px]">
        <dt className="border-r border-[#ecc7a2] pl-1">Supervisors</dt>
        <dd className="flex gap-[10px] pl-1">
          {["Peter", "• Adric", "• Luke", "• Luke", "Brad", "• Bradley", "• Bradley", "• David", "• Simon"].map((n, i) => (
            <span key={i}>{n}</span>
          ))}
        </dd>
        <dt className="border-r border-[#ecc7a2] pt-[5px] pl-1">Crew Org. Units</dt>
        <dd className="flex gap-3 pt-[5px] pl-1">
          {["Field Shift A", "• Field Shift B", "• Field Shift C", "• Field Shift D"].map((n) => (
            <span key={n}>{n}</span>
          ))}
        </dd>
      </dl>
    </div>
    <table className="ml-px w-[610px] table-fixed border-collapse leading-[11px] text-black">
      <colgroup>
        <col className="w-[29px]" />
        <col />
        <col className="w-[70px]" />
        <col className="w-[70px]" />
        <col className="w-[71px]" />
        <col className="w-[70px]" />
      </colgroup>
      <tbody>
        <SectionHead title="Safety Obligations" />
        {rows.map((r) => (
          <tr key={r[0]} className="h-[18px] align-top">
            <td />
            <td className="border border-[#d8d8d8] py-[2px] pl-[3px] whitespace-pre">{r[0]}</td>
            {r.slice(1).map((v, i) => (
              <td key={i} className="border border-[#d8d8d8] py-[2px] pr-4 text-right">{v}</td>
            ))}
          </tr>
        ))}
        <SectionHead title="Critical Control Verification Tasks" />
        <tr className="h-[18px]">
          <td />
          {[0, 1, 2, 3, 4].map((i) => (
            <td key={i} className="border border-[#d8d8d8]" />
          ))}
        </tr>
      </tbody>
    </table>
  </article>
);

const MainPanel = () => (
  <main className="relative flex min-w-0 flex-1 flex-col border-t border-r-2 border-[#8c8c8c] bg-[#f0f0f0]">
    <span className="pointer-events-none absolute top-[1px] -left-[2px] z-10 h-[113px] w-[488px] border-[3px] border-[#0000ff] shadow-md">
      <Badge n={4} className="-top-[12px] -right-[7px]" />
    </span>
    <div className="flex h-[18px] shrink-0 items-center justify-between border-b border-[#777] pr-[7px]">
      <span className="flex h-full">
        <Svg className="h-[17px] w-4" box="0 0 16 17">
          <path d="M1 17L15 0h1v17z" fill="#fff" />
          <path d="M1 17L15 1" stroke="#888" />
        </Svg>
        <h2 className="w-[77px] border-r border-[#999] bg-white pl-1 font-['Noto_Sans',sans-serif] text-[9px] leading-[18px] font-bold whitespace-nowrap text-black">Report Viewer</h2>
      </span>
      <Caret />
    </div>
    <div className="flex h-[20px] shrink-0 items-end bg-[#525252] pl-1 font-['Noto_Sans',sans-serif]">
      <button type="button" className="flex h-[18px] w-[81px] items-center gap-[6px] rounded-t-[3px] bg-[#d0d4dc] pl-[5px] text-[#333]">
        <ViewReportIcon />
        View Report
      </button>
      <button type="button" className="flex h-[18px] items-center gap-[7px] pl-3 text-[#eee]">
        <SubscriptionIcon />
        Subscriptions
      </button>
    </div>
    <div className="flex h-[68px] shrink-0 border-t-2 border-[#999]">
      <form className="grid flex-1 auto-rows-[20px] grid-cols-[93px_169px_69px_1fr] pt-[2px] pl-[10px] leading-[18px] text-[#222]" onSubmit={(e) => e.preventDefault()}>
        <label htmlFor="site" className="font-[Roboto,sans-serif]">Site</label>
        <Select id="site" value="" w="w-[119px]" />
        <label htmlFor="from" className="font-[Roboto,sans-serif]">From Date</label>
        <DateField id="from" />
        <label htmlFor="to" className="font-[Roboto,sans-serif]">To Date</label>
        <DateField id="to" />
        <label htmlFor="types" className="font-[Roboto,sans-serif]">Shift Log Types</label>
        <Select id="types" value="Field Maintenance" w="w-[137px]" />
        <label htmlFor="people" className="font-[Roboto,sans-serif]">Supervisor Personnel</label>
        <Select id="people" value="Beckett, Clive [20053], Bell, Pe" w="w-[137px]" />
        <label htmlFor="units" className="font-[Roboto,sans-serif]">Crew Org Units</label>
        <Select id="units" value="Coal Analysis & Improvement (F" w="w-[137px]" />
      </form>
      <div className="w-[72px] border-l border-[#888] px-[2px] pt-[2px]">
        <button type="button" className="h-[20px] w-full border-[3px] border-[#0000ff] bg-[#dcdcdc] text-black shadow-md">View Report</button>
      </div>
    </div>
    <div className="flex h-[6px] shrink-0 justify-center bg-[#e2e2e2]">
      <span className="flex w-[28px] items-center justify-center bg-[#a8a8a8]">
        <Caret className="h-[3px] w-[5px] rotate-180 text-white" />
      </span>
    </div>
    <Toolbar />
    <div className="flex min-h-0 flex-1 border-t border-b-2 border-t-[#efefef] border-b-[#8c8c8c] bg-white">
      <div className="flex w-2 shrink-0 items-center border-r border-[#e8e8e8] bg-[#e4e4e4] pl-[3px]">
        <span className="h-[22px] w-1 bg-[#c4c4c4]" />
      </div>
      <div className="min-w-0 flex-1 overflow-hidden">
        <Report />
      </div>
      <div className="flex w-[14px] shrink-0 flex-col items-center bg-[#f0f0f0] py-[3px]">
        <Chevron bold className="size-2 rotate-180" />
        <span className="mt-[3px] h-[172px] w-3 bg-[#cdcdcd]" />
        <Chevron bold className="mt-auto size-2" />
      </div>
    </div>
  </main>
);

export default function App() {
  return (
    <div className="relative flex h-screen flex-col overflow-hidden bg-[#8c8c8c] font-[Lato,Roboto,sans-serif] text-[9px] text-[#222]">
      <Orb />
      <TitleBar />
      <MenuBar />
      <Ribbon />
      <div className="h-1 shrink-0 border-y border-[#5c5c5c] bg-[#8c8c8c]" />
      <div className="flex min-h-0 flex-1 pb-px pl-[2px]">
        <LeftPanel />
        <div className="w-[3px] shrink-0 bg-[#4a4a4a]" />
        <MainPanel />
      </div>
    </div>
  );
}
